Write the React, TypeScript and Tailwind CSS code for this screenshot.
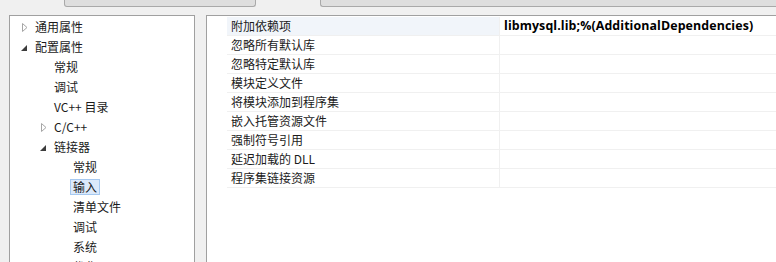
import React from "react";

const FONT = { fontFamily: '"Noto Sans CJK SC", "Noto Sans", sans-serif' };

type Node = { label: string; level: number; arrow?: "open" | "closed"; selected?: boolean };

const TREE: Node[] = [
  { label: "通用属性", level: 0, arrow: "closed" },
  { label: "配置属性", level: 0, arrow: "open" },
  { label: "常规", level: 1 },
  { label: "调试", level: 1 },
  { label: "VC++ 目录", level: 1 },
  { label: "C/C++", level: 1, arrow: "closed" },
  { label: "链接器", level: 1, arrow: "open" },
  { label: "常规", level: 2 },
  { label: "输入", level: 2, selected: true },
  { label: "清单文件", level: 2 },
  { label: "调试", level: 2 },
  { label: "系统", level: 2 },
  { label: "优化", level: 2 },
];

const PAD = ["pl-[9px]", "pl-[28px]", "pl-[47px]"];

const PROPS = [
  { name: "附加依赖项", value: "libmysql.lib;%(AdditionalDependencies)" },
  { name: "忽略所有默认库", value: "" },
  { name: "忽略特定默认库", value: "" },
  { name: "模块定义文件", value: "" },
  { name: "将模块添加到程序集", value: "" },
  { name: "嵌入托管资源文件", value: "" },
  { name: "强制符号引用", value: "" },
  { name: "延迟加载的 DLL", value: "" },
  { name: "程序集链接资源", value: "" },
];

function Arrow({ kind }: { kind: "open" | "closed" }) {
  if (kind === "closed") {
    return (
      <svg width="6" height="9" viewBox="0 0 6 9" className="ml-[3px]">
        <path d="M0.5 0.5 L5 4.5 L0.5 8.5 Z" fill="#ffffff" stroke="#a6a6a6" strokeWidth="1" />
      </svg>
    );
  }
  return (
    <svg width="6" height="6" viewBox="0 0 6 6" className="ml-[2px] mt-[2px]">
      <path d="M6 0 L6 6 L0 6 Z" fill="#3c3c3c" />
    </svg>
  );
}

export default function App() {
  return (
    <div className="w-[776px] h-[262px] overflow-hidden bg-[#f0f0f0] text-[12px] text-[#1b1b1b]" style={FONT}>
      {/* top buttons, cut off by the window edge */}
      <div className="flex h-[15px] items-start">
        <div className="ml-[64px] w-[192px] h-[7px] rounded-b-[3px] border border-t-0 border-[#a9a9a9] bg-[#dedede]" />
        <div className="ml-[64px] flex-1 h-[7px] rounded-bl-[3px] border border-t-0 border-r-0 border-[#a9a9a9] bg-[#dedede]" />
      </div>

      <div className="flex">
        {/* tree */}
        <div className="ml-[9px] w-[186px] h-[260px] border border-[#a0a0a0] bg-white pt-px">
          {TREE.map((n, i) => (
            <div key={i} className={`flex h-[20px] items-center ${PAD[n.level]}`}>
              <div className="w-[16px] flex items-center">{n.arrow && <Arrow kind={n.arrow} />}</div>
              {n.selected ? (
                <span className="-ml-[3px] px-[2px] h-[16px] leading-[14px] border border-[#a6c9f0] bg-[#dbe9fb]">{n.label}</span>
              ) : (
                <span>{n.label}</span>
              )}
            </div>
          ))}
        </div>

        {/* property grid */}
        <div className="ml-[11px] flex-1 h-[260px] border border-r-0 border-[#a0a0a0] bg-white pt-px">
          {PROPS.map((p, i) => (
            <div key={i} className="flex h-[19px] pl-[20px]">
              <div
                className={`w-[273px] flex items-center pl-[4px] border-b border-r border-[#f0f0f0] ${
                  i === 0 ? "bg-[#f1f5fa]" : "bg-white"
                }`}
              >
                {p.name}
              </div>
              <div
                className="flex-1 flex items-center pl-[4px] border-b border-[#f0f0f0] font-bold text-[12.4px] tracking-[0.1px] text-black"
                style={{ fontFamily: '"Open Sans", "Noto Sans", sans-serif' }}
              >
                {p.value}
              </div>
            </div>
          ))}
        </div>
      </div>
    </div>
  );
}
